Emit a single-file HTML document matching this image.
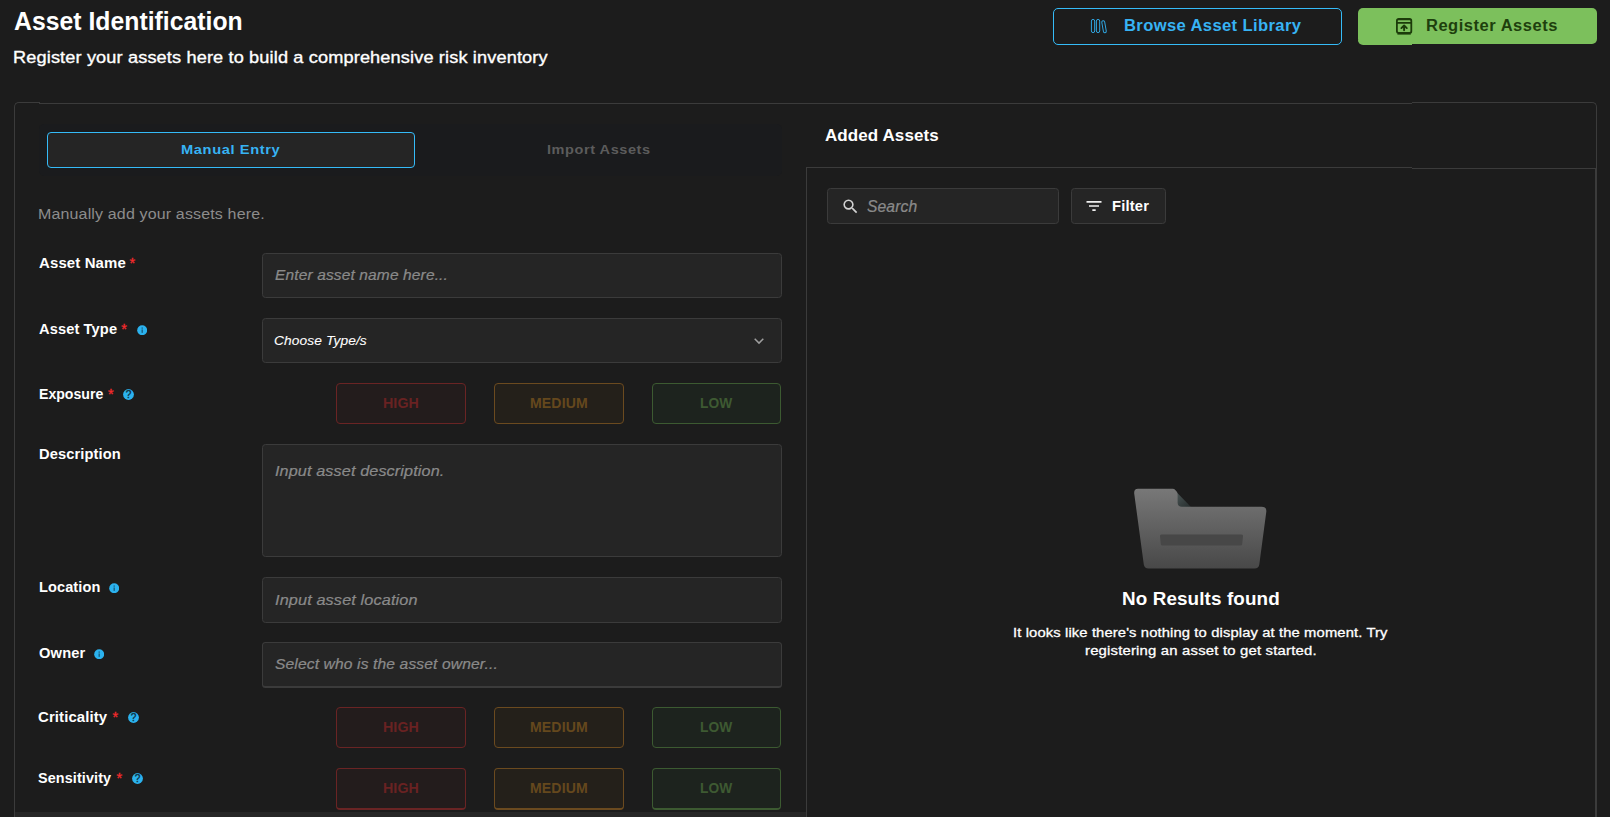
<!DOCTYPE html>
<html lang="en">
<head>
<meta charset="utf-8">
<title>Asset Identification</title>
<style>
*{box-sizing:border-box;margin:0;padding:0}
html,body{width:1610px;height:817px;overflow:hidden;background:#1c1c1c}
body{font-family:"Liberation Sans",sans-serif;color:#fff;position:relative}
.t{position:absolute;white-space:nowrap;line-height:1;font-weight:400;transform-origin:0 0}
.b{position:absolute}
.ln{position:absolute;background:#3b3b3b}
.btn{position:absolute;border-radius:5px}
#browse{left:1053px;top:8px;width:289px;height:37px;border:1px solid #35bbf8}
#register{left:1358px;top:8px;width:239px;height:36px;background:#7cc05c}
#register2{left:1358px;top:40px;width:54px;height:5px;background:#7cc05c;border-radius:0 0 0 5px}
#tabs{left:39px;top:124px;width:743px;height:52px;background:#1a1b1d;border-radius:5px}
#tabon{left:47px;top:132px;width:368px;height:36px;border:1px solid #35bbf8;border-radius:4px;background:#252525}
.inp{position:absolute;left:262px;width:520px;background:#252525;border:1px solid #3b3b3b;border-radius:3.500px}
.lvl{position:absolute;height:41px;width:130px;border-radius:4px;border:1px solid}
.hi{left:336px;border-color:#6a2424;background:#231c1c}
.me{left:494px;border-color:#6b4a1f;background:#24201a}
.lo{left:652px;width:129px;border-color:#3c5a31;background:#1d231e}
.req{position:absolute;color:#f62a2c;font-size:14.500px;font-weight:400;line-height:1;-webkit-text-stroke:0.300px #f62a2c}
.ic{position:absolute;width:11px;height:11px}
#strip{left:15px;top:812px;width:791px;height:5px;background:#262626}
</style>
</head>
<body>
<header>
<h1 class="t" id="title" style="left:14.00px;top:8.81px;font-size:25.50px;font-weight:700;color:#fff;letter-spacing:0.030px;transform:scaleX(0.9700)">Asset Identification</h1>
<p class="t" id="subtitle" style="left:13.00px;top:50.31px;font-size:16.64px;font-weight:400;color:#fff;letter-spacing:0.120px;transform:scaleX(1.0930);-webkit-text-stroke:0.35px #fff">Register your assets here to build a comprehensive risk inventory</p>
<div class="btn" id="browse"></div>
<svg class="b" style="left:1090px;top:18px" width="18" height="16" viewBox="0 0 18 16" fill="none" stroke="#30a8e4" stroke-width="1"><rect x="1.400" y="1.400" width="3.300" height="13.200" rx="1.650"/><rect x="6.400" y="1.400" width="3.300" height="13.200" rx="1.650"/><rect x="12.600" y="2.700" width="2.900" height="12.100" rx="1.450" transform="rotate(-10 14.050 8.800)"/></svg>
<span class="t" id="tb" style="left:1124.00px;top:18.46px;font-size:16.00px;font-weight:700;color:#37b3f4;letter-spacing:0.363px;transform:scaleX(1.0358)">Browse Asset Library</span>
<div class="btn" id="register"></div><div class="b" id="register2"></div>
<svg class="b" style="left:1395px;top:17px" width="18" height="19" viewBox="0 0 18 19" fill="none" stroke="#1c3b0a" stroke-width="1.800" stroke-linecap="round" stroke-linejoin="round"><rect x="1.900" y="2" width="14.400" height="14" rx="1.700"/><path d="M2.600 2.700H15.600" stroke-width="1.300"/><path d="M2 5.900H16.200" stroke-width="1.600"/><path d="M9.100 13.300V8.800M6.400 11.100 9.100 8.400l2.700 2.700" stroke-width="1.900"/><path d="M2.800 17.100H15.400" stroke-width="1.100" stroke-opacity="0.800"/></svg>
<span class="t" id="tr" style="left:1426.00px;top:18.46px;font-size:16.00px;font-weight:700;color:#1e3f0d;letter-spacing:0.498px;transform:scaleX(1.0314)">Register Assets</span>
</header>

<main>
<!-- card outline -->
<div class="b" style="left:14px;top:102px;width:26px;height:20px;border:1px solid #3b3b3b;border-right:0;border-bottom:0;border-radius:5px 0 0 0"></div>
<div class="ln" style="left:14px;top:121px;width:1px;height:700px"></div>
<div class="ln" style="left:39px;top:103px;width:1373px;height:1px"></div>
<div class="b" style="left:1412px;top:102px;width:185px;height:20px;border:1px solid #3b3b3b;border-left:0;border-bottom:0;border-radius:0 5px 0 0"></div>
<div class="ln" style="left:1596px;top:121px;width:1px;height:700px"></div>
<div class="ln" style="left:1595px;top:169px;width:1px;height:660px"></div>
<div class="ln" style="left:806px;top:167px;width:606px;height:1px"></div>
<div class="ln" style="left:1412px;top:168px;width:184px;height:1px"></div>
<div class="ln" style="left:806px;top:167px;width:1px;height:660px"></div>

<section id="form">
<div class="b" id="tabs"></div><div class="b" id="tabon"></div>
<span class="t" id="tab1" style="left:181.00px;top:142.76px;font-size:13.52px;font-weight:700;color:#37b3f4;letter-spacing:0.552px;transform:scaleX(1.0854)">Manual Entry</span>
<span class="t" id="tab2" style="left:547.00px;top:142.76px;font-size:13.52px;font-weight:700;color:#5c5c5c;letter-spacing:0.537px;transform:scaleX(1.0727)">Import Assets</span>
<p class="t" id="hint" style="left:38.00px;top:206.87px;font-size:14.56px;font-weight:400;color:#8c8c8c;letter-spacing:0.135px;transform:scaleX(1.1000)">Manually add your assets here.</p>

<label class="t" id="l1" style="left:39.00px;top:255.77px;font-size:14.56px;font-weight:700;color:#fff;letter-spacing:0.128px;transform:scaleX(1.0279)">Asset Name</label><span class="req" style="left:129.5px;top:256px">*</span>
<div class="inp" style="top:253px;height:45px"></div><span class="t" id="p1" style="left:275.00px;top:267.43px;font-size:15.08px;font-weight:400;color:#8a8a8a;letter-spacing:0.128px;transform:scaleX(1.0284);font-style:italic;-webkit-text-stroke:0.22px #8a8a8a">Enter asset name here...</span>

<label class="t" id="l2" style="left:39.00px;top:321.67px;font-size:14.56px;font-weight:700;color:#fff;letter-spacing:0.126px;transform:scaleX(1.0045)">Asset Type</label><span class="req" style="left:121.3px;top:322px">*</span>
<svg class="ic" style="left:136.8px;top:324.800px;width:10.400px;height:10.400px" viewBox="0 0 11 11"><circle cx="5.500" cy="5.500" r="5.300" fill="#2bb2ee"/><rect x="4.800" y="4.700" width="1.400" height="3.600" fill="#175a7c"/><rect x="4.800" y="2.600" width="1.400" height="1.300" fill="#175a7c"/></svg>
<div class="inp" style="top:318px;height:45px"></div><span class="t" id="p2" style="left:274.00px;top:333.66px;font-size:13.52px;font-weight:400;color:#fff;letter-spacing:0.098px;transform:scaleX(1.0178);font-style:italic;-webkit-text-stroke:0.1px #fff">Choose Type/s</span>
<svg class="b" style="left:753px;top:336px" width="12" height="10" viewBox="0 0 12 10" fill="none" stroke="#9e9e9e" stroke-width="1.500"><path d="M1.700 2.800 6 7.100l4.300-4.300"/></svg>

<label class="t" id="l3" style="left:39.00px;top:386.57px;font-size:14.56px;font-weight:700;color:#fff;letter-spacing:-0.011px;transform:scaleX(0.9700)">Exposure</label><span class="req" style="left:108px;top:387px">*</span>
<svg class="ic" style="left:123px;top:389px" viewBox="0 0 11 11"><circle cx="5.500" cy="5.500" r="5.400" fill="#2bb2ee"/><text x="5.500" y="9.200" font-size="10.050" font-weight="400" font-family="Liberation Sans, sans-serif" text-anchor="middle" fill="#0f3548" stroke="#0f3548" stroke-width="0.400">?</text></svg>
<div class="lvl hi" style="top:383px"></div><div class="lvl me" style="top:383px"></div><div class="lvl lo" style="top:383px"></div>
<span class="t" id="he" style="left:383.00px;top:396.25px;font-size:14.00px;font-weight:700;color:#692222;letter-spacing:0.092px;transform:scaleX(1.0157)">HIGH</span><span class="t" id="me" style="left:530.00px;top:396.25px;font-size:14.00px;font-weight:700;color:#65481d;letter-spacing:0.114px;transform:scaleX(1.0063)">MEDIUM</span><span class="t" id="we" style="left:700.00px;top:396.25px;font-size:14.00px;font-weight:700;color:#3e5a32;letter-spacing:0.061px;transform:scaleX(0.9824)">LOW</span>

<label class="t" id="l4" style="left:39.00px;top:447.07px;font-size:14.56px;font-weight:700;color:#fff;letter-spacing:0.100px;transform:scaleX(1.0080)">Description</label>
<div class="inp" style="top:444px;height:113px"></div><span class="t" id="p4" style="left:275.00px;top:463.13px;font-size:15.08px;font-weight:400;color:#8a8a8a;letter-spacing:0.109px;transform:scaleX(1.0742);font-style:italic;-webkit-text-stroke:0.22px #8a8a8a">Input asset description.</span>

<label class="t" id="l5" style="left:39.00px;top:580.07px;font-size:14.56px;font-weight:700;color:#fff;letter-spacing:0.096px">Location</label>
<svg class="ic" style="left:108.900px;top:582.800px;width:10.400px;height:10.400px" viewBox="0 0 11 11"><circle cx="5.500" cy="5.500" r="5.300" fill="#2bb2ee"/><rect x="4.800" y="4.700" width="1.400" height="3.600" fill="#175a7c"/><rect x="4.800" y="2.600" width="1.400" height="1.300" fill="#175a7c"/></svg>
<div class="inp" style="top:577px;height:46px"></div><span class="t" id="p5" style="left:275.00px;top:592.23px;font-size:15.08px;font-weight:400;color:#8a8a8a;letter-spacing:0.118px;transform:scaleX(1.0784);font-style:italic;-webkit-text-stroke:0.22px #8a8a8a">Input asset location</span>

<label class="t" id="l6" style="left:39.00px;top:645.77px;font-size:14.56px;font-weight:700;color:#fff;letter-spacing:0.134px;transform:scaleX(1.0112)">Owner</label>
<svg class="ic" style="left:93.600px;top:648.800px;width:10.400px;height:10.400px" viewBox="0 0 11 11"><circle cx="5.500" cy="5.500" r="5.300" fill="#2bb2ee"/><rect x="4.800" y="4.700" width="1.400" height="3.600" fill="#175a7c"/><rect x="4.800" y="2.600" width="1.400" height="1.300" fill="#175a7c"/></svg>
<div class="inp" style="top:642px;height:46px;border-bottom-width:2px"></div><span class="t" id="p6" style="left:275.00px;top:656.03px;font-size:15.08px;font-weight:400;color:#8a8a8a;letter-spacing:0.116px;transform:scaleX(1.0359);font-style:italic;-webkit-text-stroke:0.22px #8a8a8a">Select who is the asset owner...</span>

<label class="t" id="l7" style="left:38.00px;top:710.47px;font-size:14.56px;font-weight:700;color:#fff;letter-spacing:0.097px;transform:scaleX(1.0278)">Criticality</label><span class="req" style="left:112.500px;top:710px">*</span>
<svg class="ic" style="left:128px;top:712px" viewBox="0 0 11 11"><circle cx="5.500" cy="5.500" r="5.400" fill="#2bb2ee"/><text x="5.500" y="9.200" font-size="10.050" font-weight="400" font-family="Liberation Sans, sans-serif" text-anchor="middle" fill="#0f3548" stroke="#0f3548" stroke-width="0.400">?</text></svg>
<div class="lvl hi" style="top:707px"></div><div class="lvl me" style="top:707px"></div><div class="lvl lo" style="top:707px"></div>
<span class="t" id="hc" style="left:383.00px;top:720.25px;font-size:14.00px;font-weight:700;color:#692222;letter-spacing:0.092px;transform:scaleX(1.0157)">HIGH</span><span class="t" id="mc" style="left:530.00px;top:720.25px;font-size:14.00px;font-weight:700;color:#65481d;letter-spacing:0.114px;transform:scaleX(1.0063)">MEDIUM</span><span class="t" id="wc" style="left:700.00px;top:720.25px;font-size:14.00px;font-weight:700;color:#3e5a32;letter-spacing:0.061px;transform:scaleX(0.9824)">LOW</span>

<label class="t" id="l8" style="left:38.00px;top:770.57px;font-size:14.56px;font-weight:700;color:#fff;letter-spacing:0.114px;transform:scaleX(0.9895)">Sensitivity</label><span class="req" style="left:116.500px;top:771px">*</span>
<svg class="ic" style="left:132px;top:773px" viewBox="0 0 11 11"><circle cx="5.500" cy="5.500" r="5.400" fill="#2bb2ee"/><text x="5.500" y="9.200" font-size="10.050" font-weight="400" font-family="Liberation Sans, sans-serif" text-anchor="middle" fill="#0f3548" stroke="#0f3548" stroke-width="0.400">?</text></svg>
<div class="lvl hi" style="top:768px;height:42px;border-bottom-width:2px"></div><div class="lvl me" style="top:768px;height:42px;border-bottom-width:2px"></div><div class="lvl lo" style="top:768px;height:42px;border-bottom-width:2px"></div>
<span class="t" id="hs" style="left:383.00px;top:781.25px;font-size:14.00px;font-weight:700;color:#692222;letter-spacing:0.092px;transform:scaleX(1.0157)">HIGH</span><span class="t" id="ms" style="left:530.00px;top:781.25px;font-size:14.00px;font-weight:700;color:#65481d;letter-spacing:0.114px;transform:scaleX(1.0063)">MEDIUM</span><span class="t" id="ws" style="left:700.00px;top:781.25px;font-size:14.00px;font-weight:700;color:#3e5a32;letter-spacing:0.061px;transform:scaleX(0.9824)">LOW</span>
<div class="b" id="strip"></div>
</section>

<section id="assets">
<h2 class="t" id="added" style="left:825.00px;top:127.91px;font-size:16.64px;font-weight:700;color:#fff;letter-spacing:0.098px;transform:scaleX(1.0210)">Added Assets</h2>
<div class="inp" style="left:827px;top:188px;width:232px;height:36px"></div>
<svg class="b" style="left:840.500px;top:197px" width="19" height="19" viewBox="0 0 24 24" fill="#d2d2d2"><path d="M15.500 14h-.79l-.28-.27A6.471 6.471 0 0 0 16 9.500 6.500 6.500 0 1 0 9.500 16c1.610 0 3.090-.59 4.230-1.570l.27.28v.79l5 4.990L20.490 19l-4.990-5zm-6 0C7.010 14 5 11.990 5 9.500S7.010 5 9.500 5 14 7.010 14 9.500 11.990 14 9.500 14z"/></svg>
<span class="t" id="ps" style="left:867.00px;top:198.69px;font-size:15.60px;font-weight:400;color:#8a8a8a;letter-spacing:0.100px;transform:scaleX(1.0044);font-style:italic;-webkit-text-stroke:0.22px #8a8a8a">Search</span>
<div class="inp" style="left:1071px;top:188px;width:95px;height:36px"></div>
<svg class="b" style="left:1084px;top:196px" width="20" height="20" viewBox="0 0 24 24" fill="#f0f0f0"><path d="M10 18h4v-2h-4v2zM3 6v2h18V6H3zm3 7h12v-2H6v2z"/></svg>
<span class="t" id="pf" style="left:1112.00px;top:198.67px;font-size:14.56px;font-weight:700;color:#fff;letter-spacing:0.173px;transform:scaleX(1.0119)">Filter</span>
<svg class="b" style="left:1130px;top:484px" width="142" height="90" viewBox="0 0 142 90">
<defs><linearGradient id="fg" x1="0" y1="0" x2="0" y2="1"><stop offset="0" stop-color="#787878"/><stop offset="1" stop-color="#484848"/></linearGradient>
<linearGradient id="fd" x1="0" y1="0" x2="1" y2="1"><stop offset="0.300" stop-color="#465050"/><stop offset="1" stop-color="#262d2d"/></linearGradient></defs>
<path d="M43.500 5 61 23H46Z" fill="url(#fd)"/>
<path d="M8 4.800H42.500Q44.300 4.800 45.500 6.200L47 8Q47.600 9 47.600 10.500V18.800Q47.800 22.700 51.800 22.700H131.500Q136.800 22.700 136.300 27.800L129.300 80.500Q128.800 84.500 124.500 84.500H18.500Q14.500 84.500 13.800 80.500L4.200 9.500Q3.800 4.800 8 4.800Z" fill="url(#fg)"/>
<path d="M31.500 50.500H111.500Q113.200 50.500 113 52L112.200 60Q112 61.500 110.500 61.500H32.500Q31 61.500 30.800 60L30 52Q29.800 50.500 31.500 50.500Z" fill="#474747"/>
</svg>
<h3 class="t" id="nores" style="left:1122.00px;top:589.95px;font-size:18.72px;font-weight:700;color:#fff;letter-spacing:0.122px;transform:scaleX(1.0065)">No Results found</h3>
<p class="t" id="d1" style="left:1013.00px;top:625.66px;font-size:13.52px;font-weight:400;color:#fff;letter-spacing:0.117px;transform:scaleX(1.0918);-webkit-text-stroke:0.3px #fff">It looks like there's nothing to display at the moment. Try</p>
<p class="t" id="d2" style="left:1085.00px;top:644.36px;font-size:13.52px;font-weight:400;color:#fff;letter-spacing:0.175px;transform:scaleX(1.1000);-webkit-text-stroke:0.3px #fff">registering an asset to get started.</p>
</section>
</main>
</body>
</html>
